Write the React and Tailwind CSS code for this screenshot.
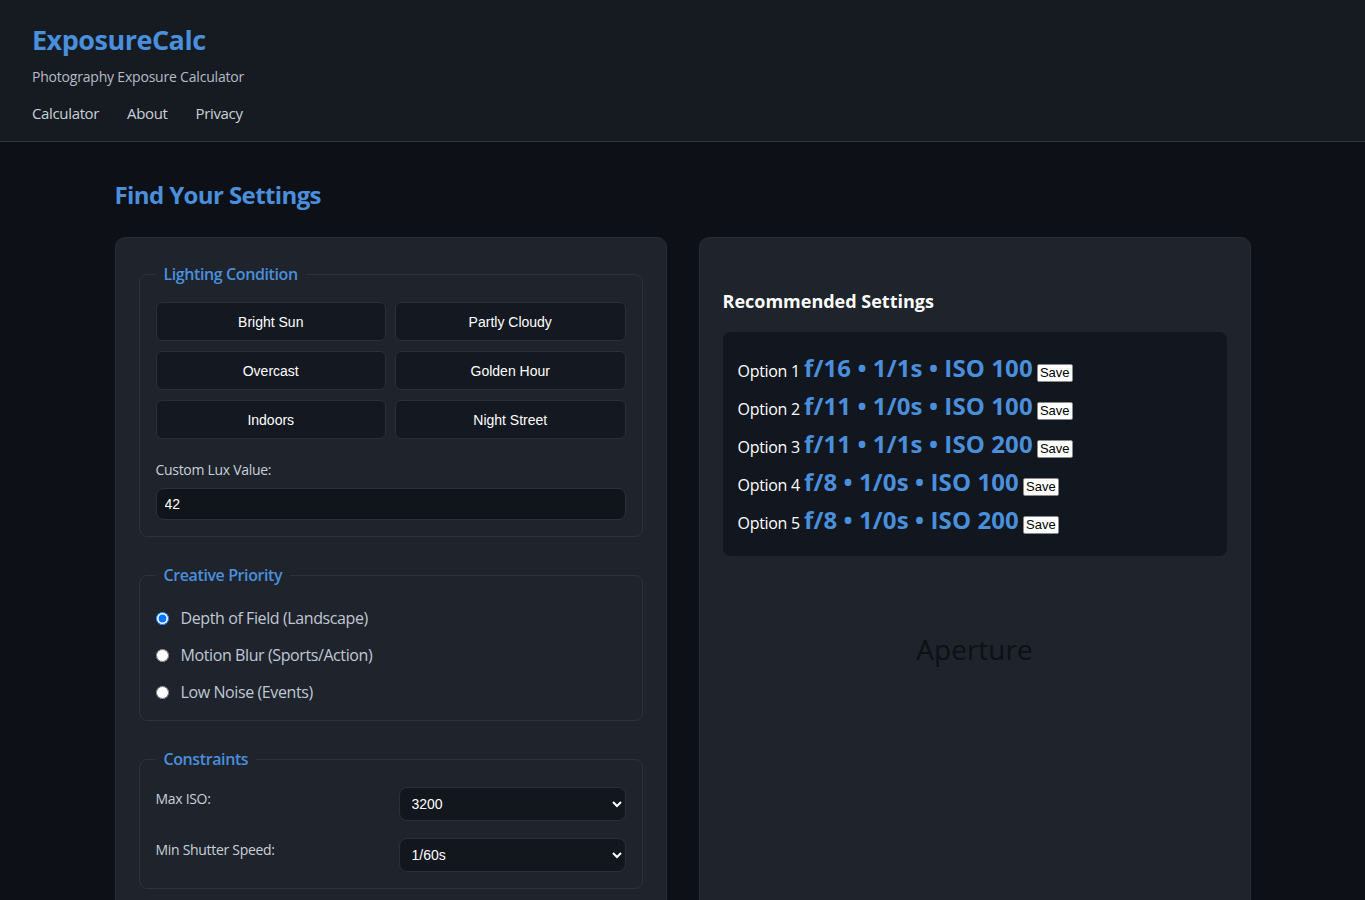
import React from 'react';

const lighting = ['Bright Sun', 'Partly Cloudy', 'Overcast', 'Golden Hour', 'Indoors', 'Night Street'];

const priorities = [
  { id: 'dof', label: 'Depth of Field (Landscape)', checked: true },
  { id: 'motion', label: 'Motion Blur (Sports/Action)' },
  { id: 'noise', label: 'Low Noise (Events)' },
];

const results = [
  { f: 'f/16', s: '1/1s', iso: 'ISO 100' },
  { f: 'f/11', s: '1/0s', iso: 'ISO 100' },
  { f: 'f/11', s: '1/1s', iso: 'ISO 200' },
  { f: 'f/8', s: '1/0s', iso: 'ISO 100' },
  { f: 'f/8', s: '1/0s', iso: 'ISO 200' },
];

const sans = "font-['Open_Sans',_'Noto_Sans',_sans-serif]";
const arial = "font-['Liberation_Sans',_Arial,_sans-serif]";

function Fieldset({ title, className = 'pb-4', children }) {
  return (
    <fieldset className={`border border-[#2c323b] rounded-lg px-4 pt-4 ${className}`}>
      <legend className="px-2 text-base font-semibold leading-6 tracking-[-0.4px] text-[#4a8fdc]">{title}</legend>
      {children}
    </fieldset>
  );
}

export default function App() {
  return (
    <div className={`min-h-screen bg-[#0d1117] text-[#c9d1d9] ${sans}`}>
      {/* Header */}
      <header className="bg-[#161b22] border-b border-[#30363d] px-8 pt-[23px] pb-[17px]">
        <h1 className="text-[27px] font-bold leading-[34px] tracking-[-0.5px] text-[#4a8fdc]">ExposureCalc</h1>
        <p className="mt-[10px] text-sm leading-5 tracking-[-0.2px] text-[#b4bcc8]">Photography Exposure Calculator</p>
        <nav className="mt-[15px] flex gap-7 text-[15px] leading-[22px] tracking-[-0.35px] text-[#c9d1d9]">
          <a>Calculator</a>
          <a>About</a>
          <a>Privacy</a>
        </nav>
      </header>

      <main className="max-w-[1200px] mx-auto px-8 pt-[37px]">
        <h2 className="text-2xl font-bold leading-8 tracking-[-0.6px] text-[#4a8fdc] mb-[26px]">Find Your Settings</h2>

        <div className="grid grid-cols-2 gap-8">
          {/* Inputs */}
          <section className="bg-[#1e232c] border border-[#272d36] rounded-[10px] px-[23px] pt-6 pb-6 flex flex-col gap-[26px]">
            <Fieldset title="Lighting Condition">
              <div className="grid grid-cols-2 gap-x-[9px] gap-y-[10px]">
                {lighting.map((l) => (
                  <button
                    key={l}
                    className={`h-[39px] rounded-md border border-[#2a3039] bg-[#141820] text-sm text-white ${arial}`}
                  >
                    {l}
                  </button>
                ))}
              </div>
              <label className="block mt-[21px] mb-2 text-sm leading-5 tracking-[-0.3px] text-[#c9d1d9]">Custom Lux Value:</label>
              <input
                defaultValue="42"
                className={`w-full h-8 rounded-lg border border-[#2a3039] bg-[#10141b] px-2 text-sm text-white outline-none ${arial}`}
              />
            </Fieldset>

            <Fieldset title="Creative Priority" className="pb-[13px]">
              <div className="flex flex-col gap-[7px]">
                {priorities.map((p) => (
                  <label key={p.id} className="h-[30px] flex items-center text-base tracking-[-0.4px] text-[#c0c8d3]">
                    <input type="radio" name="priority" defaultChecked={p.checked} className="m-0 w-[13px] h-[13px]" />
                    <span className="ml-[12px]">{p.label}</span>
                  </label>
                ))}
              </div>
            </Fieldset>

            <Fieldset title="Constraints">
              <div className="grid grid-cols-2 gap-x-4 gap-y-[17px]">
                <label className="text-sm leading-6 tracking-[-0.3px] text-[#c9d1d9]">Max ISO:</label>
                <select
                  defaultValue="3200"
                  className={`h-[34px] rounded-lg border border-[#2a3039] bg-[#12161d] pl-2 pr-1 text-sm text-white ${arial}`}
                >
                  <option>800</option>
                  <option>1600</option>
                  <option>3200</option>
                  <option>6400</option>
                </select>
                <label className="text-sm leading-6 tracking-[-0.3px] text-[#c9d1d9]">Min Shutter Speed:</label>
                <select
                  defaultValue="1/60s"
                  className={`h-[34px] rounded-lg border border-[#2a3039] bg-[#12161d] pl-2 pr-1 text-sm text-white ${arial}`}
                >
                  <option>1/30s</option>
                  <option>1/60s</option>
                  <option>1/125s</option>
                </select>
              </div>
            </Fieldset>
          </section>

          {/* Results */}
          <section className="bg-[#1e232c] border border-[#272d36] rounded-[10px] px-[23px] pt-6 pb-6">
            <h3 className="mt-[26px] mb-[17px] text-lg font-bold leading-[27px] text-white">Recommended Settings</h3>
            <div className="bg-[#12161e] rounded-lg px-[15px] pt-5 pb-[14px]">
              {results.map((r, i) => (
                <div key={i} className="leading-[38px] text-white whitespace-nowrap">
                  <span className="text-base tracking-[-0.3px]">Option {i + 1}</span>{' '}
                  <strong className="text-2xl font-bold tracking-[0.1px] text-[#4a8fdc]">
                    {r.f} • {r.s} • {r.iso}
                  </strong>{' '}
                  <button className={`bg-white text-black text-[13px] leading-4 px-[2px] border border-[#8a8a8a] rounded-[2px] ${arial}`}>
                    Save
                  </button>
                </div>
              ))}
            </div>
            <div className="mt-[75px] text-center text-[28px] leading-9 text-[#0e1014]">Aperture</div>
          </section>
        </div>
      </main>
    </div>
  );
}
